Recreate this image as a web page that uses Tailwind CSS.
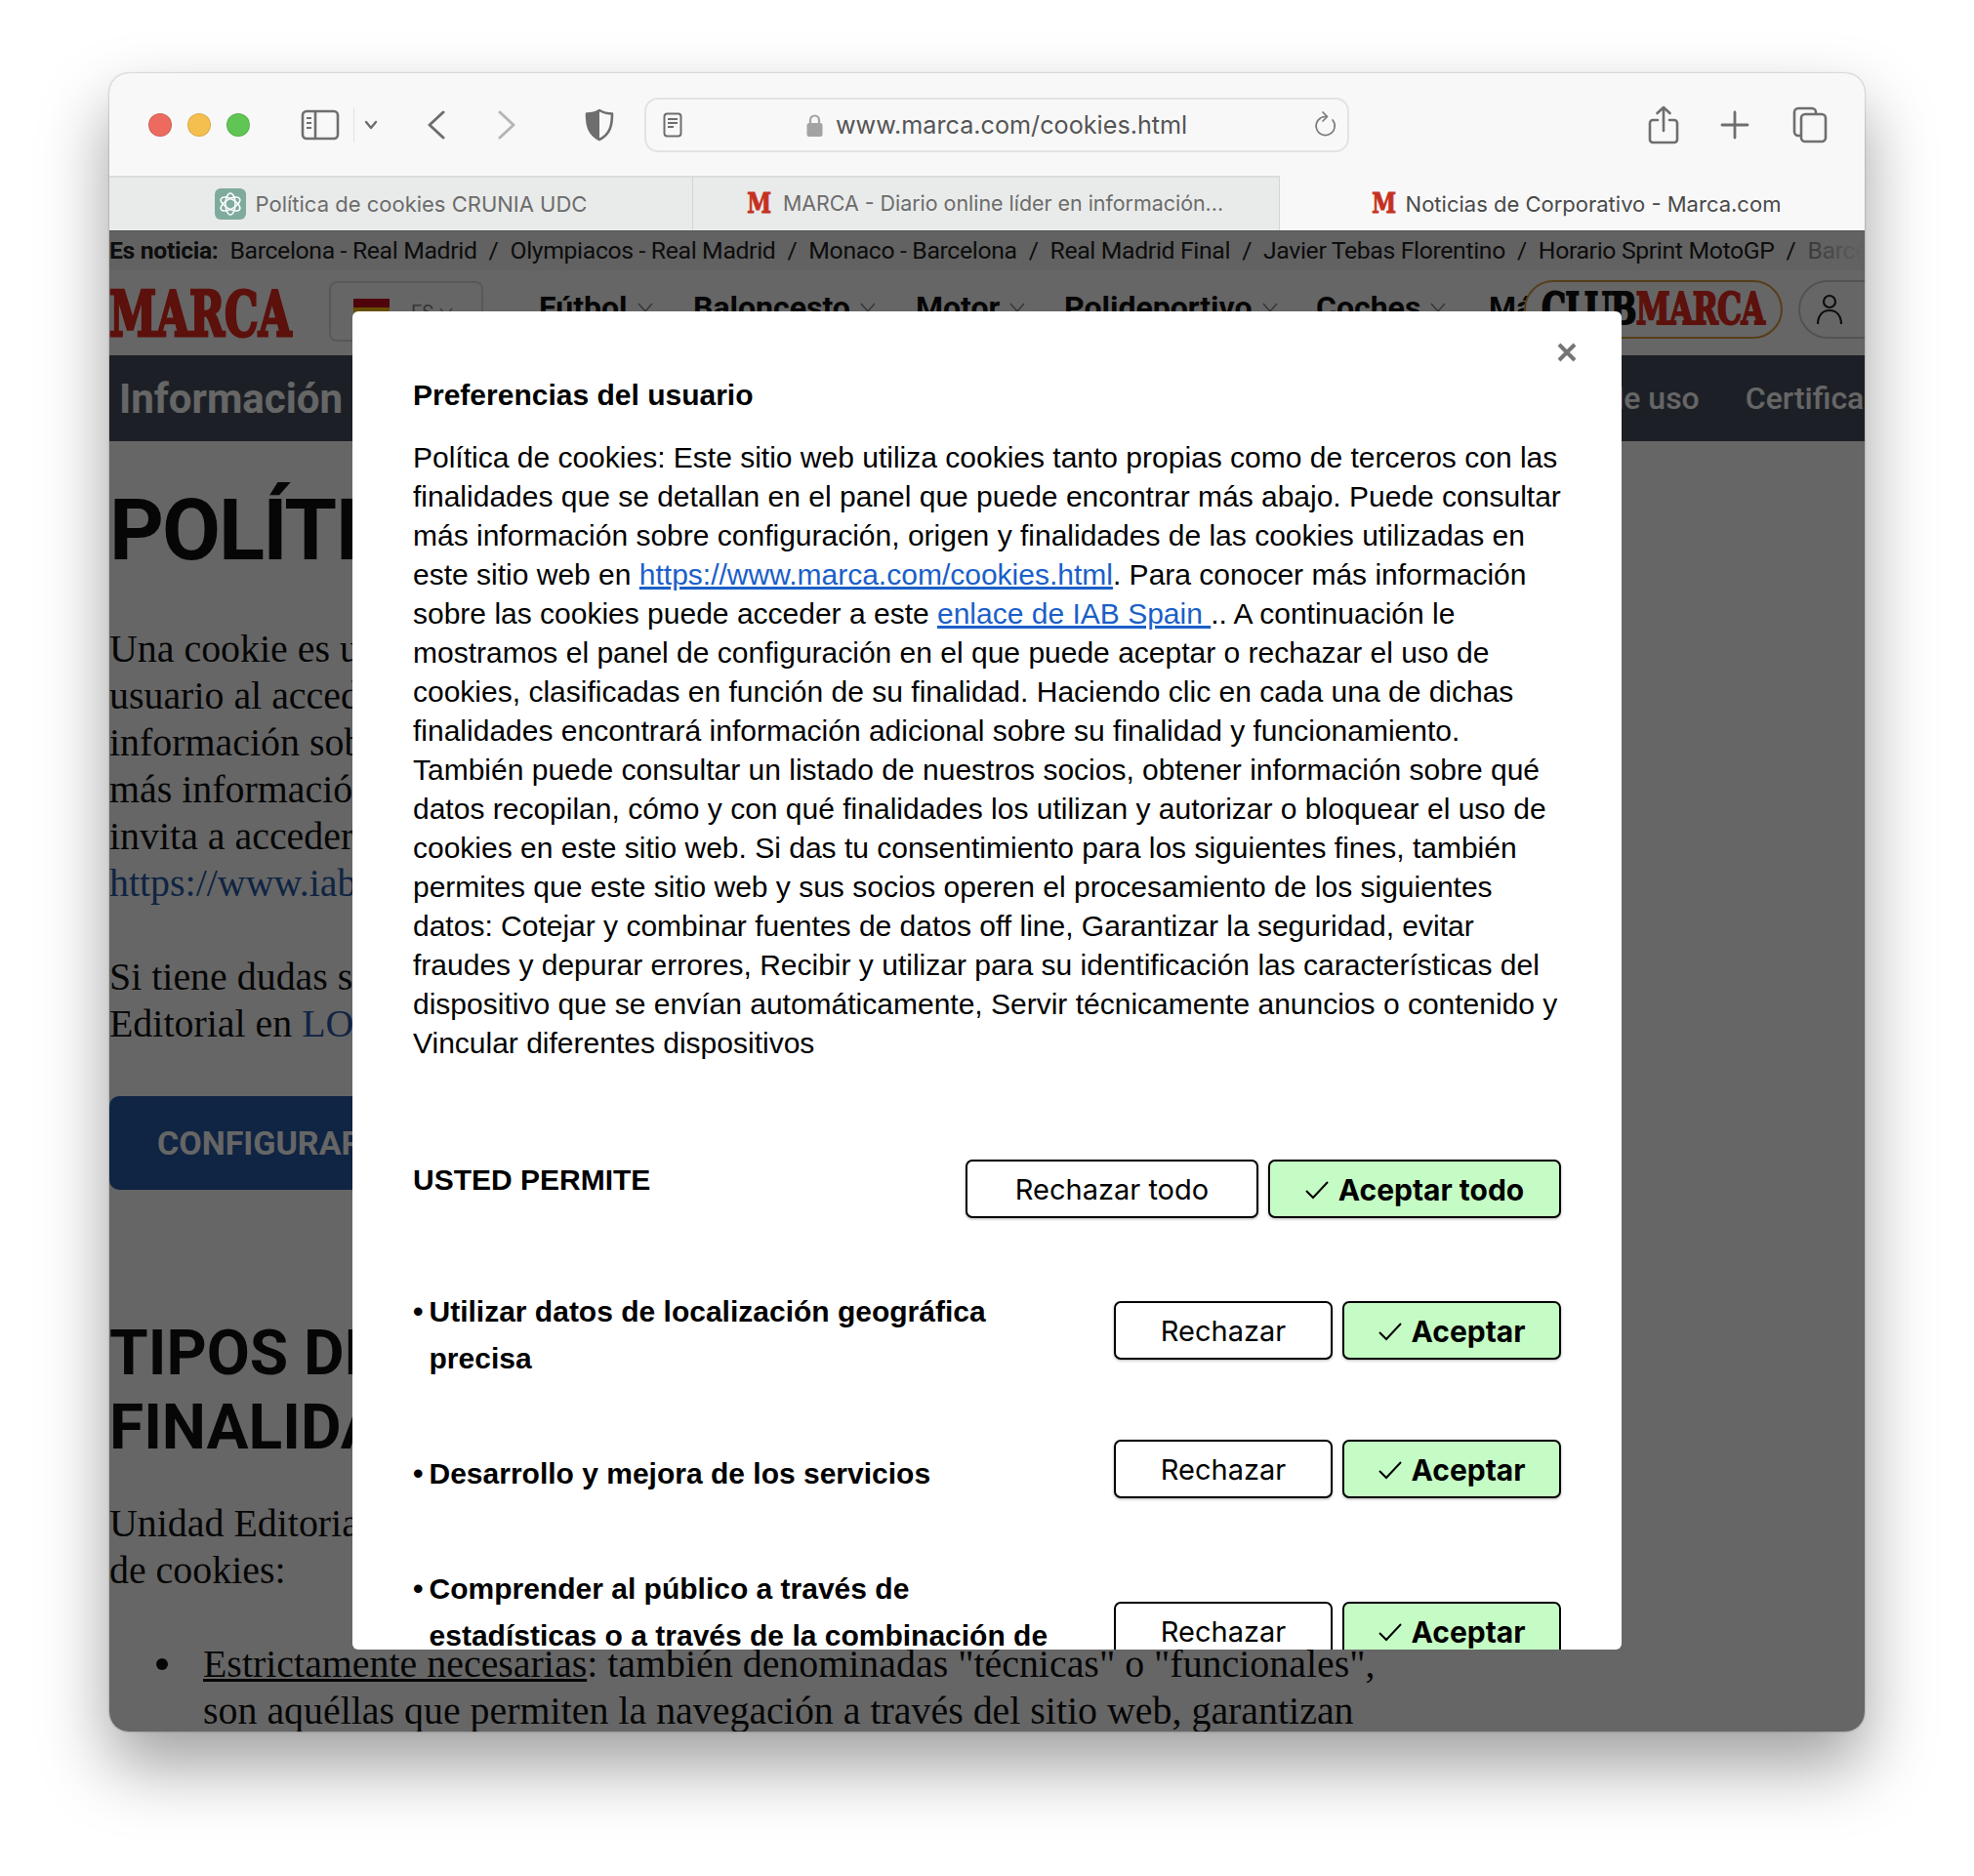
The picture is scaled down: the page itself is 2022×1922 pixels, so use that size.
<!DOCTYPE html>
<html lang="es">
  <head>
    <meta charset="UTF-8" />
    <title>Preferencias del usuario</title>
    <script src="https://cdn.jsdelivr.net/npm/@tailwindcss/browser@4"></script>
  </head>
  <body class="bg-white h-[1922px] w-[2022px] overflow-hidden pt-[75px] pl-[112px] font-['Inter',sans-serif]">
    <div class="w-[1798px] h-[1699px] rounded-[20px] overflow-hidden bg-[#f8f8f8] flex flex-col shadow-[0_35px_70px_rgba(0,0,0,0.38),0_0_2px_rgba(0,0,0,0.4)]">

      <!-- toolbar -->
      <div class="h-[105px] shrink-0 flex items-center relative text-[#6e6e6e]">
        <div class="flex gap-[16px] ml-[40px]">
          <span class="w-[24px] h-[24px] rounded-full bg-[#ed6a5e] border border-black/10"></span>
          <span class="w-[24px] h-[24px] rounded-full bg-[#f5bf4f] border border-black/10"></span>
          <span class="w-[24px] h-[24px] rounded-full bg-[#61c554] border border-black/10"></span>
        </div>
        <svg class="ml-[52px]" width="40" height="32" viewBox="0 0 40 32" fill="none" stroke="#6e6e6e" stroke-width="2.6">
          <rect x="2" y="2" width="36" height="28" rx="4" />
          <path d="M15 2v28" />
          <path d="M6 9h5M6 14h5M6 19h5" stroke-width="2" />
        </svg>
        <div class="w-px h-[36px] bg-[#e2e2e2] ml-[14px]"></div>
        <svg class="ml-[10px]" width="14" height="10" viewBox="0 0 14 10" fill="none" stroke="#6e6e6e" stroke-width="2.4" stroke-linecap="round" stroke-linejoin="round"><path d="M2 2l5 6 5-6" /></svg>
        <svg class="ml-[50px]" width="20" height="30" viewBox="0 0 20 30" fill="none" stroke="#6e6e6e" stroke-width="3" stroke-linecap="round" stroke-linejoin="round"><path d="M17 2L3 15l14 13" /></svg>
        <svg class="ml-[52px]" width="20" height="30" viewBox="0 0 20 30" fill="none" stroke="#b5b5b5" stroke-width="3" stroke-linecap="round" stroke-linejoin="round"><path d="M3 2l14 13L3 28" /></svg>
        <svg class="ml-[70px]" width="30" height="34" viewBox="0 0 30 34">
          <path d="M15 2C11 4.500 6 5.500 2 5.500c0 12 2 21 13 26.500 11-5.500 13-14.500 13-26.500C24 5.500 19 4.500 15 2z" fill="none" stroke="#6e6e6e" stroke-width="2.6" stroke-linejoin="round" />
          <path d="M15 2C11 4.500 6 5.500 2 5.500c0 12 2 21 13 26.500z" fill="#6e6e6e" />
        </svg>
        <!-- address bar -->
        <div class="ml-[31px] w-[722px] h-[56px] rounded-[14px] border-2 border-[#e3e3e3] flex items-center">
          <svg class="ml-[17px]" width="20" height="26" viewBox="0 0 20 26" fill="none" stroke="#6e6e6e" stroke-width="2"><rect x="1.500" y="1.500" width="17" height="23" rx="3" /><path d="M5 7h10M5 11h10M5 15h6" /></svg>
          <svg class="ml-[127px]" width="17" height="24" viewBox="0 0 17 24"><path d="M4 10V7a4.500 4.500 0 019 0v3" fill="none" stroke="#a3a3a3" stroke-width="2.200" /><rect x="0.500" y="10" width="16" height="14" rx="2.500" fill="#a3a3a3" /></svg>
          <span class="ml-[13px] pt-[2px] text-[25.200px] text-[#555] leading-none whitespace-nowrap">www.marca.com/cookies.html</span>
          <svg class="ml-auto mr-[11px]" width="24" height="28" viewBox="0 0 24 28" fill="none" stroke="#7a7a7a" stroke-width="1.700" stroke-linecap="round" stroke-linejoin="round"><path d="M13 5.500a9.500 9.500 0 107 3.500" /><path d="M10 1l4.500 4.500L10 10" /></svg>
        </div>
        <svg class="ml-[306px]" width="32" height="40" viewBox="0 0 32 40" fill="none" stroke="#6e6e6e" stroke-width="2.600" stroke-linecap="round" stroke-linejoin="round"><path d="M10 15H5a3 3 0 00-3 3v17a3 3 0 003 3h22a3 3 0 003-3V18a3 3 0 00-3-3h-5" /><path d="M16 26V2M9.500 8L16 2l6.500 6" /></svg>
        <svg class="ml-[42px]" width="30" height="30" viewBox="0 0 30 30" fill="none" stroke="#6e6e6e" stroke-width="2.800" stroke-linecap="round"><path d="M15 2v26M2 15h26" /></svg>
        <svg class="ml-[44px]" width="36" height="38" viewBox="0 0 36 38" fill="none" stroke="#6e6e6e" stroke-width="2.600"><path d="M9 30H6a4 4 0 01-4-4V6a4 4 0 014-4h14a4 4 0 014 4v2" /><rect x="9" y="8" width="25" height="28" rx="4" /></svg>
      </div>

      <!-- tabs -->
      <div class="h-[56px] shrink-0 flex text-[22px] leading-none">
        <div class="w-[598px] bg-[#e9ebea] border-t-2 border-[#dcdcdc] border-r border-r-[#d4d4d4] flex items-center justify-center gap-[10px] text-[#6c6c6c]">
          <svg width="32" height="32" viewBox="0 0 32 32" fill="none" stroke="#fff" stroke-width="1.500">
            <rect width="32" height="32" rx="6" fill="#7fab9e" stroke="none" />
            <ellipse cx="16" cy="16" rx="5" ry="11" />
            <ellipse cx="16" cy="16" rx="5" ry="11" transform="rotate(60 16 16)" />
            <ellipse cx="16" cy="16" rx="5" ry="11" transform="rotate(120 16 16)" />
          </svg>
          <span>Política de cookies CRUNIA UDC</span>
        </div>
        <div class="w-[601px] bg-[#e9ebea] border-t-2 border-[#dcdcdc] border-r border-r-[#d4d4d4] flex items-center justify-center gap-[16px] pr-[4px] text-[#6c6c6c] text-[21.400px]">
          <span class="font-['DejaVu_Serif',serif] font-bold text-[#c5311f] text-[28px] scale-x-[.8] w-[23px] [-webkit-text-stroke:1px_#c5311f]">M</span>
          <span>MARCA - Diario online líder en información...</span>
        </div>
        <div class="flex-1 flex items-center justify-center gap-[14px] text-[#4a4a4a] pt-[1px] pl-[6px]">
          <span class="font-['DejaVu_Serif',serif] font-bold text-[#c5311f] text-[28px] scale-x-[.8] w-[23px] [-webkit-text-stroke:1px_#c5311f]">M</span>
          <span>Noticias de Corporativo - Marca.com</span>
        </div>
      </div>

      <!-- page under the overlay -->
      <div class="relative flex-1 bg-white overflow-hidden border-t border-[#555] font-['Roboto',sans-serif] text-[#111]">
        <div class="h-[40px] bg-[#f6f6f6] flex items-center whitespace-nowrap text-[24.750px] tracking-[-0.34px] text-[#222] overflow-hidden relative">
          <b class="mr-[12px]">Es noticia:</b>
          <div class="flex gap-[12px]">
            <span>Barcelona - Real Madrid</span><span>/</span>
            <span>Olympiacos - Real Madrid</span><span>/</span>
            <span>Monaco - Barcelona</span><span>/</span>
            <span>Real Madrid Final</span><span>/</span>
            <span>Javier Tebas Florentino</span><span>/</span>
            <span>Horario Sprint MotoGP</span><span>/</span>
            <span>Barcelona</span>
          </div>
          <div class="absolute right-0 top-0 bottom-0 w-[70px] bg-gradient-to-r from-[#f6f6f6]/40 to-[#f6f6f6]"></div>
        </div>

        <div class="h-[87px] flex items-start pt-[13px] relative">
          <span class="w-[186px] block font-['DejaVu_Serif',serif] font-bold text-[64px] leading-[64px] text-[#e62b1e] origin-left scale-x-[.68] whitespace-nowrap [-webkit-text-stroke:3px_#e62b1e]">MARCA</span>
          <div class="ml-[39px] -mt-[2px] w-[158px] h-[62px] rounded-[8px] border-2 border-[#ddd] flex items-start pt-[16px] pl-[23px] gap-[22px] text-[20px] text-[#888] shrink-0">
            <div class="w-[37px] flex flex-col"><span class="h-[9px] bg-[#c60b1e]"></span><span class="h-[20px] bg-[#ffc400]"></span></div>
            <div class="flex items-center gap-[6px] -mt-[1px]"><span>ES</span><svg width="14" height="10" viewBox="0 0 14 10" fill="none" stroke="#999" stroke-width="1.500"><path d="M1 1l6 8 6-8" /></svg></div>
          </div>
          <nav class="absolute left-[440px] top-[18px] flex font-bold text-[32px] leading-[40px] text-[#111] whitespace-nowrap">
            <span class="absolute left-0 flex items-center gap-[10px]">Fútbol<svg width="16" height="10" viewBox="0 0 16 10" fill="none" stroke="#888" stroke-width="1.500"><path d="M1 1l7 8 7-8" /></svg></span>
            <span class="absolute left-[158px] flex items-center gap-[10px]">Baloncesto<svg width="16" height="10" viewBox="0 0 16 10" fill="none" stroke="#888" stroke-width="1.500"><path d="M1 1l7 8 7-8" /></svg></span>
            <span class="absolute left-[386px] flex items-center gap-[10px]">Motor<svg width="16" height="10" viewBox="0 0 16 10" fill="none" stroke="#888" stroke-width="1.500"><path d="M1 1l7 8 7-8" /></svg></span>
            <span class="absolute left-[538px] flex items-center gap-[10px]">Polideportivo<svg width="16" height="10" viewBox="0 0 16 10" fill="none" stroke="#888" stroke-width="1.500"><path d="M1 1l7 8 7-8" /></svg></span>
            <span class="absolute left-[796px] flex items-center gap-[10px]">Coches<svg width="16" height="10" viewBox="0 0 16 10" fill="none" stroke="#888" stroke-width="1.500"><path d="M1 1l7 8 7-8" /></svg></span>
            <span class="absolute left-[973px]">Más</span>
          </nav>
          <div class="absolute left-[1449px] top-[10px] w-[265px] h-[60px] rounded-full border-2 border-[#d89a3f] bg-white flex items-center justify-center font-['DejaVu_Serif',serif] font-bold text-[45px] whitespace-nowrap">
            <span class="scale-x-[.7] tracking-[-1px] [-webkit-text-stroke:2px_currentColor]"><span class="text-[#111]">CLUB</span><span class="text-[#e62b1e]">MARCA</span></span>
          </div>
          <div class="absolute left-[1730px] top-[10px] w-[100px] h-[60px] rounded-full border-2 border-[#ccc] pl-[17px] pt-[12px]">
            <svg width="26" height="32" viewBox="0 0 26 32" fill="none" stroke="#222" stroke-width="2.200"><circle cx="13" cy="8" r="6" /><path d="M1 31c0-9 5-14 12-14s12 5 12 14" /></svg>
          </div>
        </div>

        <div class="h-[88px] bg-[#485160] flex items-center justify-between text-white whitespace-nowrap">
          <span class="ml-[10px] font-bold text-[42px]">Información</span>
          <div class="flex gap-[47px] font-medium text-[32px] text-white -mr-[52px]">
            <span>Condiciones de uso</span>
            <span>Certificados</span>
          </div>
        </div>

        <h1 class="font-bold text-[87px] tracking-[-2px] leading-[100px] mt-[41px] whitespace-nowrap">POLÍTICA DE COOKIES</h1>

        <div class="font-['Liberation_Serif',serif] text-[39.900px] leading-[48px] mt-[48px] whitespace-nowrap">
          <p>Una cookie es un fichero que se descarga en el ordenador del</p>
          <p>usuario al acceder a determinadas páginas web</p>
          <p>información sobre el uso de cookies de este sitio</p>
          <p>más información sobre cookies</p>
          <p>invita a acceder a</p>
          <p class="text-[#2a5ba8]">https://www.iabspain.es</p>
          <p class="mt-[48px]">Si tiene dudas sobre esta política</p>
          <p>Editorial en <span class="text-[#2a5ba8]">LOPD@unidadeditorial.es</span></p>
        </div>

        <div class="mt-[50px] w-[500px] h-[96px] rounded-[10px] bg-[#2a5ba8] flex items-center pl-[49px] font-bold text-[34px] text-white whitespace-nowrap">CONFIGURAR COOKIES</div>

        <h2 class="font-bold text-[64px] leading-[76px] mt-[130px] whitespace-nowrap">TIPOS DE COOKIES Y<br />FINALIDADES</h2>

        <div class="font-['Liberation_Serif',serif] text-[39.900px] leading-[48px] mt-[36px] whitespace-nowrap">
          <p>Unidad Editorial utiliza los siguientes tipos</p>
          <p>de cookies:</p>
          <div class="mt-[48px] flex">
            <span class="ml-[48px] mt-[18px] w-[12px] h-[12px] rounded-full bg-[#111]"></span>
            <p class="ml-[36px]"><span class="underline">Estrictamente necesarias</span>: también denominadas "técnicas" o "funcionales",<br />son aquéllas que permiten la navegación a través del sitio web, garantizan</p>
          </div>
        </div>

        <!-- overlay and modal -->
        <div class="absolute inset-0 bg-black/60"></div>
        <div class="absolute left-[249px] top-[82px] w-[1300px] h-[1371px] bg-white rounded-[6px] overflow-hidden px-[62px] font-['Liberation_Sans',sans-serif] text-black">
          <svg class="absolute right-[46px] top-[32px]" width="20" height="20" viewBox="0 0 20 20" fill="none" stroke="#757575" stroke-width="4"><path d="M2 2l16 16M18 2L2 18" /></svg>
          <h2 class="font-bold text-[30px] leading-[40px] pt-[66px]">Preferencias del usuario</h2>
          <p class="text-[30px] leading-[40px] mt-[24px]">Política de cookies: Este sitio web utiliza cookies tanto propias como de terceros con las finalidades que se detallan en el panel que puede encontrar más abajo. Puede consultar más información sobre configuración, origen y finalidades de las cookies utilizadas en este sitio web en <a class="text-[#1a5fc8] underline">https://www.marca.com/cookies.html</a>. Para conocer más información sobre las cookies puede acceder a este <a class="text-[#1a5fc8] underline">enlace de IAB Spain </a>.. A continuación le mostramos el panel de configuración en el que puede aceptar o rechazar el uso de cookies, clasificadas en función de su finalidad. Haciendo clic en cada una de dichas finalidades encontrará información adicional sobre su finalidad y funcionamiento. También puede consultar un listado de nuestros socios, obtener información sobre qué datos recopilan, cómo y con qué finalidades los utilizan y autorizar o bloquear el uso de cookies en este sitio web. Si das tu consentimiento para los siguientes fines, también permites que este sitio web y sus socios operen el procesamiento de los siguientes datos: Cotejar y combinar fuentes de datos off line, Garantizar la seguridad, evitar fraudes y depurar errores, Recibir y utilizar para su identificación las características del dispositivo que se envían automáticamente, Servir técnicamente anuncios o contenido y Vincular diferentes dispositivos</p>

          <div class="flex justify-between items-start mt-[99px]">
            <h3 class="font-bold text-[30px] leading-[40px] pt-[1px]">USTED PERMITE</h3>
            <div class="flex gap-[10px] font-['Inter',sans-serif] text-[29px] leading-none">
              <button class="w-[300px] h-[60px] rounded-[7px] border-2 border-black bg-white shadow-[0_1px_3px_rgba(0,0,0,0.3)] pt-[1px]">Rechazar todo</button>
              <button class="w-[300px] h-[60px] rounded-[7px] border-2 border-black bg-[#c5fcc5] shadow-[0_1px_3px_rgba(0,0,0,0.3)] font-bold text-[30px] flex items-center justify-center gap-[10px] pt-[1px]">
                <svg width="24" height="20" viewBox="0 0 24 20" fill="none" stroke="#000" stroke-width="2"><path d="M1 11l7 7L23 2" /></svg>Aceptar todo
              </button>
            </div>
          </div>

          <div class="flex justify-between items-start mt-[85px]">
            <div class="w-[600px] flex gap-[6px] font-bold text-[30px] leading-[48px] -mt-[13px]"><span>•</span><span>Utilizar datos de localización geográfica precisa</span></div>
            <div class="flex gap-[10px] font-['Inter',sans-serif] text-[29px] leading-none">
              <button class="w-[224px] h-[60px] rounded-[7px] border-2 border-black bg-white shadow-[0_1px_3px_rgba(0,0,0,0.3)] pt-[1px]">Rechazar</button>
              <button class="w-[224px] h-[60px] rounded-[7px] border-2 border-black bg-[#c5fcc5] shadow-[0_1px_3px_rgba(0,0,0,0.3)] font-bold text-[30px] flex items-center justify-center gap-[10px] pt-[1px]">
                <svg width="24" height="20" viewBox="0 0 24 20" fill="none" stroke="#000" stroke-width="2"><path d="M1 11l7 7L23 2" /></svg>Aceptar
              </button>
            </div>
          </div>

          <div class="flex justify-between items-start mt-[59px]">
            <div class="w-[600px] flex gap-[6px] font-bold text-[30px] leading-[48px] pt-[11px]"><span>•</span><span>Desarrollo y mejora de los servicios</span></div>
            <div class="flex gap-[10px] font-['Inter',sans-serif] text-[29px] leading-none">
              <button class="w-[224px] h-[60px] rounded-[7px] border-2 border-black bg-white shadow-[0_1px_3px_rgba(0,0,0,0.3)] pt-[1px]">Rechazar</button>
              <button class="w-[224px] h-[60px] rounded-[7px] border-2 border-black bg-[#c5fcc5] shadow-[0_1px_3px_rgba(0,0,0,0.3)] font-bold text-[30px] flex items-center justify-center gap-[10px] pt-[1px]">
                <svg width="24" height="20" viewBox="0 0 24 20" fill="none" stroke="#000" stroke-width="2"><path d="M1 11l7 7L23 2" /></svg>Aceptar
              </button>
            </div>
          </div>

          <div class="flex justify-between items-start mt-[106px]">
            <div class="w-[660px] flex gap-[6px] font-bold text-[30px] leading-[48px] -mt-[37px]"><span>•</span><span>Comprender al público a través de estadísticas o a través de la combinación de datos</span></div>
            <div class="flex gap-[10px] font-['Inter',sans-serif] text-[29px] leading-none">
              <button class="w-[224px] h-[60px] rounded-[7px] border-2 border-black bg-white pt-[1px]">Rechazar</button>
              <button class="w-[224px] h-[60px] rounded-[7px] border-2 border-black bg-[#c5fcc5] font-bold text-[30px] flex items-center justify-center gap-[10px] pt-[1px]">
                <svg width="24" height="20" viewBox="0 0 24 20" fill="none" stroke="#000" stroke-width="2"><path d="M1 11l7 7L23 2" /></svg>Aceptar
              </button>
            </div>
          </div>
        </div>
      </div>
    </div>
  </body>
</html>
